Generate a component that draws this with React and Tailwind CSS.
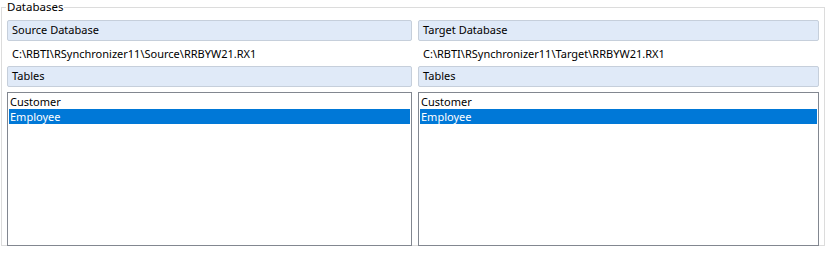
const panels = [
  {
    title: 'Source Database',
    path: 'C:\\RBTI\\RSynchronizer11\\Source\\RRBYW21.RX1',
    tables: ['Customer', 'Employee'],
  },
  {
    title: 'Target Database',
    path: 'C:\\RBTI\\RSynchronizer11\\Target\\RRBYW21.RX1',
    tables: ['Customer', 'Employee'],
  },
];

function HeaderBar({ children }) {
  return (
    <div className="h-[21px] flex items-center px-[4px] bg-[#e0eaf8] border border-[#c6cfdb] rounded-[2px] text-black">
      {children}
    </div>
  );
}

function DatabasePanel({ panel }) {
  const selected = 'Employee';
  return (
    <div className="flex flex-col">
      <HeaderBar>{panel.title}</HeaderBar>
      <div className="h-[25px] flex items-center px-[5px] pt-[1px] text-black">{panel.path}</div>
      <HeaderBar>Tables</HeaderBar>
      <div className="mt-[5px] h-[154px] border border-[#828790] bg-white p-[1px]">
        {panel.tables.map((t) => (
          <div
            key={t}
            className={
              t === selected
                ? 'h-[15px] leading-[15px] px-[1px] bg-[#0078d7] text-white'
                : 'h-[15px] leading-[15px] px-[1px] text-black'
            }
          >
            {t}
          </div>
        ))}
      </div>
    </div>
  );
}

export default function App() {
  return (
    <div
      className="w-[826px] h-[253px] bg-white text-[11px]"
      style={{ fontFamily: '"Noto Sans", "Open Sans", sans-serif' }}
    >
      <fieldset className="ml-[1px] w-[824px] h-[246px] border border-[#dcdcdc] px-[5px]">
        <legend className="-ml-[1px] px-[1px] leading-[14px] text-[11.5px] text-black">Databases</legend>
        <div className="mt-[6px] grid grid-cols-[405px_401px] gap-[6px]">
          {panels.map((p) => (
            <DatabasePanel key={p.title} panel={p} />
          ))}
        </div>
      </fieldset>
    </div>
  );
}
